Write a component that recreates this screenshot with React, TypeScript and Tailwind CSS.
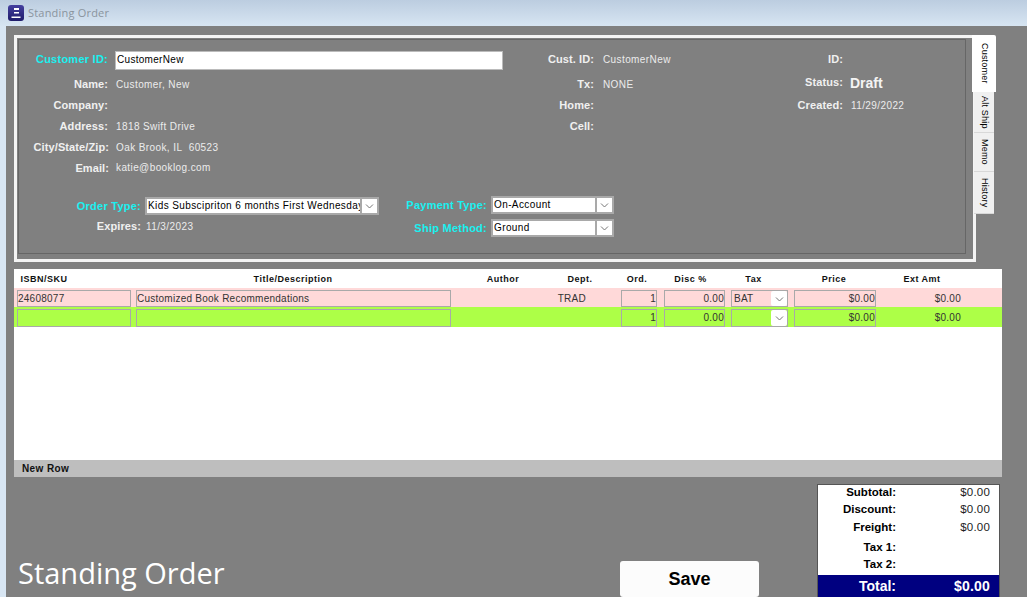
import React from 'react';

const lbl = 'text-right font-bold text-[11px] text-[#f0f0f0] tracking-[0.1px] whitespace-nowrap';
const cyan = 'text-right font-bold text-[11px] text-[#19f0f0] tracking-[0.25px] whitespace-nowrap';
const val = 'text-[10px] text-[#ececec] tracking-[0.4px] whitespace-nowrap';
const cell = 'h-full border border-[#a9a9a9] text-[10px] tracking-[0.25px] text-[#333] leading-[15px] whitespace-nowrap overflow-hidden';
const head = 'text-[9px] font-bold tracking-[0.5px] text-[#111] text-center whitespace-nowrap';
const plain = 'pt-px text-[10px] tracking-[0.25px] text-[#333] leading-[15px] text-right';

function Chevron() {
  return (
    <svg width="9" height="6" viewBox="0 0 9 6" fill="none" stroke="#777" strokeWidth="1">
      <path d="M1 1.5 L4.5 5 L8 1.5" />
    </svg>
  );
}

function Select({ text, w }: { text: string; w: string }) {
  return (
    <div className={`flex h-[18px] bg-white border-2 border-[#a9a9a9] ${w}`}>
      <div className="flex-1 min-w-0 overflow-hidden whitespace-nowrap text-[10px] tracking-[0.4px] leading-[14px] text-black pl-[1px]">{text}</div>
      <div className="w-[17px] flex items-center justify-center bg-white border-l-2 border-[#a9a9a9]">
        <Chevron />
      </div>
    </div>
  );
}

function Tab({ text, active, h }: { text: string; active?: boolean; h: string }) {
  return (
    <div
      className={`flex items-center justify-center [writing-mode:vertical-rl] text-[9px] tracking-[0.2px] text-black ${h} ${
        active ? 'w-[24px] bg-white rounded-tr-[2px]' : 'w-[20px] ml-[2px] bg-[#f0f0f0] border-b border-[#d8d8d8]'
      }`}
    >
      {text}
    </div>
  );
}

function TableRow({ bg, h, sku, title, dept, tax }: { bg: string; h: string; sku: string; title: string; dept: string; tax: string }) {
  return (
    <div className={`flex items-stretch pt-[2px] ${h} ${bg}`}>
      <div className={`${cell} ml-[3px] w-[114px]`}>{sku}</div>
      <div className={`${cell} ml-[5px] w-[315px]`}>{title}</div>
      <div className={`${plain} w-[170px] pr-[35px]`}>{dept}</div>
      <div className={`${cell} w-[36px] text-right`}>1</div>
      <div className={`${cell} ml-[7px] w-[61px] text-right`}>0.00</div>
      <div className={`${cell} ml-[6px] w-[57px] flex`}>
        <div className="flex-1 pl-[2px]">{tax}</div>
        <div className="w-[16px] bg-white rounded-[2px] flex items-center justify-center"><Chevron /></div>
      </div>
      <div className={`${cell} ml-[6px] w-[82px] text-right`}>$0.00</div>
      <div className={`${plain} w-[85px]`}>$0.00</div>
    </div>
  );
}

function Sum({ label, value, h }: { label: string; value?: string; h: string }) {
  return (
    <div className={`flex items-center ${h} text-[11.5px] text-black`}>
      <div className="w-[78px] text-right font-bold whitespace-nowrap">{label}</div>
      <div className="flex-1 text-right pr-[9px] tracking-[0.2px] text-[#222]">{value}</div>
    </div>
  );
}

export default function App() {
  return (
    <div className="w-[1027px] h-[597px] overflow-hidden bg-[#d8e6f3] font-['Liberation_Sans',Arial,sans-serif]">
      {/* title bar */}
      <div className="h-[26px] flex items-center pl-[8px] bg-gradient-to-b from-[#bccde0] to-[#d7e5f2]">
        <svg width="16" height="16" viewBox="0 0 16 16">
          <defs>
            <linearGradient id="ico" x1="0" y1="0" x2="0" y2="1">
              <stop offset="0" stopColor="#45409f" />
              <stop offset="1" stopColor="#1e1b6a" />
            </linearGradient>
          </defs>
          <rect width="16" height="16" rx="3" fill="url(#ico)" />
          <rect x="6" y="3" width="5" height="2" fill="#fff" />
          <rect x="6" y="7" width="5" height="1.5" fill="#fff" />
          <rect x="3.5" y="11.5" width="9" height="1.5" fill="#fff" />
        </svg>
        <span className="ml-[4px] text-[11px] tracking-[0.2px] text-[#8a949e] font-['Open_Sans',sans-serif]">Standing Order</span>
      </div>

      <div className="ml-[6px] h-[571px] bg-[#808080] pl-[8px] pt-[9px]">
        {/* customer panel + tabs */}
        <div className="flex items-start h-[234px]">
          <div className="w-[962px] h-[227px] border-[3px] border-[#f4f4f4] p-[1px]">
            <div className="h-[215px] w-[948px] border border-[#666] pt-[9px]">
              <div className="grid grid-cols-[90px_394px_91px_130px_119px_110px] grid-rows-[24px_22px_21px_21px_21px_21px] items-center">
                <div className={`${cyan} pb-[3px] pr-[1px]`}>Customer ID:</div>
                <div className="pl-[6px] self-start mt-[2px]">
                  <div className="w-[388px] h-[19px] bg-white border border-[#bbb] text-[10px] tracking-[0.3px] leading-[15px] text-black pl-px">CustomerNew</div>
                </div>
                <div className={`${lbl} pb-[3px]`}>Cust. ID:</div>
                <div className={`${val} pl-[9px] pb-[3px]`}>CustomerNew</div>
                <div className={`${lbl} pb-[3px]`}>ID:</div>
                <div />

                <div className={`${lbl} pr-[1px]`}>Name:</div>
                <div className={`${val} pl-[7px]`}>Customer, New</div>
                <div className={lbl}>Tx:</div>
                <div className={`${val} pl-[9px]`}>NONE</div>
                <div className={`${lbl} pb-[3px]`}>Status:</div>
                <div className="text-[14px] font-bold text-[#f4f4f4] pl-[7px] pb-[2px] whitespace-nowrap">Draft</div>

                <div className={`${lbl} pr-[1px]`}>Company:</div>
                <div />
                <div className={lbl}>Home:</div>
                <div />
                <div className={lbl}>Created:</div>
                <div className={`${val} pl-[8px]`}>11/29/2022</div>

                <div className={`${lbl} pr-[1px]`}>Address:</div>
                <div className={`${val} pl-[7px]`}>1818 Swift Drive</div>
                <div className={lbl}>Cell:</div>
                <div className="col-span-3" />

                <div className={lbl}>City/State/Zip:</div>
                <div className={`${val} pl-[7px] col-span-5`}>Oak Brook, IL&nbsp; 60523</div>

                <div className={lbl}>Email:</div>
                <div className={`${val} pl-[7px] pb-[2px] col-span-5`}>katie@booklog.com</div>
              </div>

              <div className="flex mt-[18px]">
                <div className="w-[360px]">
                  <div className="flex items-center h-[18px]">
                    <div className={`${cyan} w-[122px]`}>Order Type:</div>
                    <div className="pl-[4px]">
                      <Select text="Kids Subscipriton 6 months First Wednesday" w="w-[234px]" />
                    </div>
                  </div>
                  <div className="flex items-center h-[22px]">
                    <div className={`${lbl} w-[122px]`}>Expires:</div>
                    <div className={`${val} pl-[5px]`}>11/3/2023</div>
                  </div>
                </div>
                <div className="-mt-px">
                  <div className="flex items-center h-[18px]">
                    <div className={`${cyan} w-[108px]`}>Payment Type:</div>
                    <div className="pl-[4px]">
                      <Select text="On-Account" w="w-[123px]" />
                    </div>
                  </div>
                  <div className="flex items-center h-[18px] mt-[5px]">
                    <div className={`${cyan} w-[108px]`}>Ship Method:</div>
                    <div className="pl-[4px]">
                      <Select text="Ground" w="w-[123px]" />
                    </div>
                  </div>
                </div>
              </div>
            </div>
          </div>
          <div className="flex flex-col -ml-[4px]">
            <Tab text="Customer" active h="h-[57px]" />
            <Tab text="Alt Ship" h="h-[41px]" />
            <Tab text="Memo" h="h-[39px]" />
            <Tab text="History" h="h-[42px]" />
          </div>
        </div>

        {/* line items */}
        <div className="w-[988px] h-[191px] bg-white">
          <div className="flex items-center h-[19px] pt-[3px]">
            <div className={`${head} w-[60px]`}>ISBN/SKU</div>
            <div className={`${head} w-[430px] pl-[8px]`}>Title/Description</div>
            <div className={`${head} w-[48px] -ml-[25px]`}>Author</div>
            <div className={`${head} w-[50px] ml-[28px]`}>Dept.</div>
            <div className={`${head} w-[40px] ml-[12px]`}>Ord.</div>
            <div className={`${head} w-[61px] ml-[3px]`}>Disc %</div>
            <div className={`${head} w-[57px] ml-[4px]`}>Tax</div>
            <div className={`${head} w-[82px] ml-[11px]`}>Price</div>
            <div className={`${head} w-[60px] ml-[17px]`}>Ext Amt</div>
          </div>
          <TableRow bg="bg-[#ffd9d9]" h="h-[19px]" sku="24608077" title="Customized Book Recommendations" dept="TRAD" tax="BAT" />
          <TableRow bg="bg-[#adff47]" h="h-[20px]" sku="" title="" dept="" tax="" />
        </div>
        <div className="w-[988px] h-[17px] bg-[#bebebe] pl-[8px] text-[10px] font-bold tracking-[0.4px] leading-[17px] text-[#111]">New Row</div>

        {/* footer */}
        <div className="flex items-end w-[986px] h-[120px]">
          <div className="w-[606px] pl-[4px] text-[29px] leading-[49px] text-white font-['Open_Sans',sans-serif] whitespace-nowrap">Standing Order</div>
          <button className="w-[139px] h-[36px] bg-[#fcfcfc] rounded-[3px] text-[18px] font-bold text-black">Save</button>
          <div className="ml-[58px] w-[183px] h-[113px] bg-white border border-b-0 border-[#555]">
            <Sum label="Subtotal:" value="$0.00" h="h-[16px]" />
            <Sum label="Discount:" value="$0.00" h="h-[18px]" />
            <Sum label="Freight:" value="$0.00" h="h-[18px]" />
            <Sum label="Tax 1:" h="h-[22px]" />
            <Sum label="Tax 2:" h="h-[12px] mb-[4px]" />
            <div className="flex items-center h-[22px] pt-px bg-[#000080] text-white font-bold text-[14px]">
              <div className="w-[78px] text-right">Total:</div>
              <div className="flex-1 text-right pr-[9px] tracking-[0.2px]">$0.00</div>
            </div>
          </div>
        </div>
      </div>
    </div>
  );
}
